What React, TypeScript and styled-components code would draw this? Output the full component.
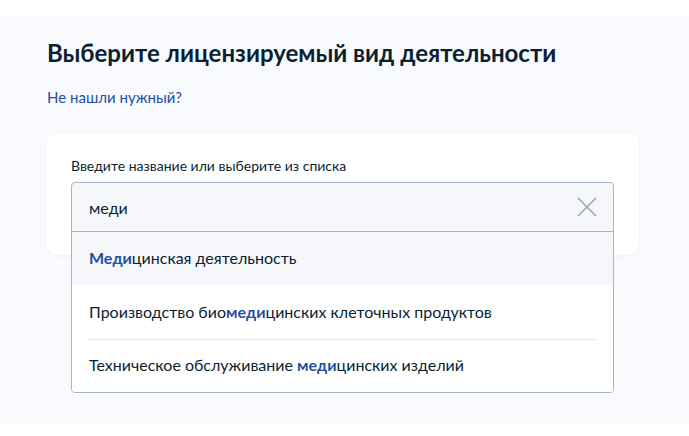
import React from "react";
import styled, { createGlobalStyle } from "styled-components";

const Global = createGlobalStyle`
  html, body { margin: 0; padding: 0; background: #ffffff; }
  body { font-family: Lato, "Noto Sans", sans-serif; color: #0b1f33; }
  * { box-sizing: border-box; }
`;

const Page = styled.main`
  margin-top: 17px;
  height: 406px;
  background: #f8fafd;
  padding: 20px 47px 0;
`;

const Title = styled.h1`
  margin: 0;
  font-size: 24px;
  line-height: 32px;
  font-weight: 700;
  color: #0b1f33;
`;

const HelpLink = styled.a`
  display: block;
  margin-top: 18px;
  font-size: 15px;
  line-height: 20px;
  color: #1f4ea3;
  text-decoration: none;
`;

const Card = styled.section`
  margin: 26px 0 0 -1px;
  width: 593px;
  background: #ffffff;
  border-radius: 12px;
  padding: 24px 25px 23px;
  box-shadow: 0 1px 4px rgba(100, 120, 160, 0.06);
`;

const Label = styled.div`
  font-size: 14px;
  line-height: 18px;
  color: #0b1f33;
  margin-bottom: 7px;
`;

const Combo = styled.div`
  position: relative;
  width: 543px;
`;

const InputBox = styled.div`
  height: 50px;
  display: flex;
  align-items: center;
  justify-content: space-between;
  padding: 0 16px 0 17px;
  background: #f5f7fa;
  border: 1.5px solid #a7b4c8;
  border-radius: 4px 4px 0 0;
`;

const Value = styled.span`
  font-size: 16px;
  color: #0b1f33;
`;

const Clear = styled.button`
  border: 0;
  background: none;
  padding: 0;
  display: flex;
  cursor: pointer;
`;

const Menu = styled.ul`
  position: absolute;
  left: 0;
  right: 0;
  top: 100%;
  margin: -1.5px 0 0;
  padding: 0;
  list-style: none;
  background: #ffffff;
  border: 1.5px solid #a7b4c8;
  border-radius: 0 0 4px 4px;
  overflow: hidden;
`;

const Item = styled.li<{ $active?: boolean }>`
  height: 53.5px;
  display: flex;
  align-items: center;
  padding: 0 17px 1px;
  background: ${(p) => (p.$active ? "#f5f7fa" : "#ffffff")};
  font-size: 16px;
  color: #0b1f33;
  position: relative;
  & + &::before {
    content: "";
    position: absolute;
    top: 0;
    left: 17px;
    right: 17px;
    border-top: 1px solid #e3e8ee;
  }
`;

const Mark = styled.b`
  font-weight: 700;
  color: #1f4ea3;
`;

const items: [string, string, string][] = [
  ["", "Меди", "цинская деятельность"],
  ["Производство био", "меди", "цинских клеточных продуктов"],
  ["Техническое обслуживание ", "меди", "цинских изделий"],
];

export default function App() {
  return (
    <>
      <Global />
      <Page>
        <Title>Выберите лицензируемый вид деятельности</Title>
        <HelpLink href="#">Не нашли нужный?</HelpLink>
        <Card>
          <Label>Введите название или выберите из списка</Label>
          <Combo>
            <InputBox>
              <Value>меди</Value>
              <Clear aria-label="Очистить">
                <svg width="20" height="20" viewBox="0 0 20 20" fill="none">
                  <path d="M1 1L19 19M19 1L1 19" stroke="#9aa6bd" strokeWidth="1.6" />
                </svg>
              </Clear>
            </InputBox>
            <Menu>
              {items.map(([a, m, b], i) => (
                <Item key={i} $active={i === 0}>
                  <span>
                    {a}
                    <Mark>{m}</Mark>
                    {b}
                  </span>
                </Item>
              ))}
            </Menu>
          </Combo>
        </Card>
      </Page>
    </>
  );
}
